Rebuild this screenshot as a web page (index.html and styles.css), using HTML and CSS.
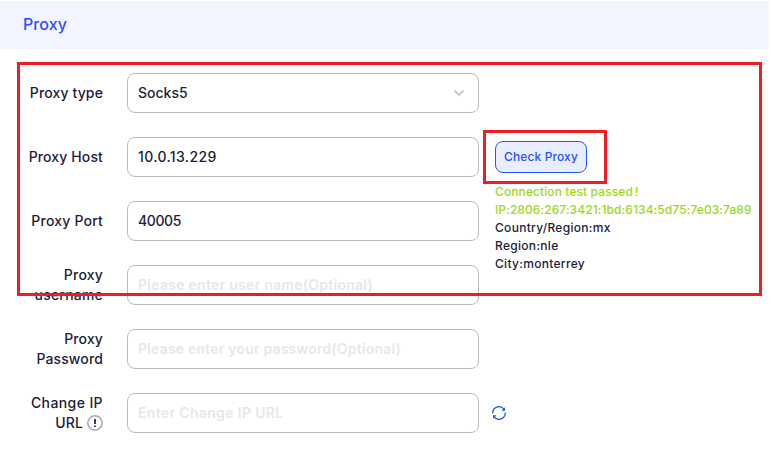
FILE: index.html
```html
<!DOCTYPE html>
<html lang="en">
<head>
<meta charset="utf-8">
<title>Proxy</title>
<link rel="stylesheet" href="styles.css">
</head>
<body>
<main class="panel">
  <header class="panel-header"><h1 class="title">Proxy</h1></header>
  <form class="form">
    <div class="row">
      <div class="label"><span>Proxy type</span></div>
      <div class="field"><span class="value socks">Socks5</span>
        <svg class="chevron" width="12" height="8" viewBox="0 0 12 8"><path d="M1.500 1.500 6 6l4.500-4.500" fill="none" stroke="#c5c6cc" stroke-width="1.800"/></svg>
      </div>
    </div>
    <div class="row">
      <div class="label"><span class="host-label">Proxy Host</span></div>
      <div class="field"><span class="value host">10.0.13.229</span></div>
      <div class="side">
        <button class="check" type="button"><span>Check Proxy</span></button>
        <div class="result">
          <div class="ok passed">Connection test passed<span class="bang">!</span></div>
          <div class="ok ip">IP:2806:267:3421:1bd:6134:5d75:7e03:7a89</div>
          <div class="country">Country/Region:mx</div>
          <div class="region">Region:nle</div>
          <div class="city">City:monterrey</div>
        </div>
      </div>
    </div>
    <div class="row">
      <div class="label"><span class="port-label">Proxy Port</span></div>
      <div class="field"><span class="value port">40005</span></div>
    </div>
    <div class="row">
      <div class="label"><span class="user-label">Proxy<br>username</span></div>
      <div class="field"><span class="hint user">Please enter user name(Optional)</span></div>
    </div>
    <div class="row">
      <div class="label"><span>Proxy<br>Password</span></div>
      <div class="field"><span class="hint pass">Please enter your password(Optional)</span></div>
    </div>
    <div class="row">
      <div class="label"><span class="change-label">Change IP</span><br><span class="url">URL <svg class="info" width="16" height="16" viewBox="0 0 16 16"><circle cx="8" cy="8" r="7.200" fill="none" stroke="#a3a5b3" stroke-width="1.500"/><path d="M8 4v5M8 10.400v1.700" stroke="#1c1d3a" stroke-width="1.700"/></svg></span></div>
      <div class="field"><span class="hint change">Enter Change IP URL</span></div>
      <svg class="refresh" width="14" height="14" viewBox="0 0 14 14"><path d="M.8 7.500A6.200 6.200 0 0 1 12 3.300M13.200 6.500A6.200 6.200 0 0 1 2 10.700" fill="none" stroke="#2354f4" stroke-width="1.300"/><path d="M13 1.200v3.600H9.400zM1 12.800V9.200h3.600z" fill="#2354f4"/></svg>
    </div>
  </form>
  <div class="mark mark-form"></div>
  <div class="mark mark-check"></div>
</main>
</body>
</html>
```
FILE: styles.css
```css
* { box-sizing: border-box; }
body {
  margin: 0;
  background: #fff;
  color: #1c1d3a;
  font: 500 14px/20px Inter, "Liberation Sans", sans-serif;
}
.panel { position: relative; width: 771px; height: 460px; padding-top: 1px; overflow: hidden; }
.panel-header { width: 769px; height: 48px; padding: 0 23px; display: flex; align-items: center; background: #f2f5ff; }
.title { margin: -2px 0 0; font-size: 16px; font-weight: 500; line-height: 24px; letter-spacing: .1px; color: #2a50fb; }
.form { padding: 24px 0 0 17px; display: flex; flex-direction: column; gap: 24px; }
.row { display: flex; align-items: center; height: 40px; }
.label { width: 86px; text-align: right; flex: none; letter-spacing: .13px; }
.port-label, .user-label { letter-spacing: .2px; }
.change-label { letter-spacing: .4px; }
.field {
  width: 352px; height: 40px; margin-left: 24px; padding: 0 13px 0 10px; flex: none;
  display: flex; align-items: center; justify-content: space-between;
  border: 1px solid #b9bac3; border-radius: 8px; background: #fff;
}
.host { letter-spacing: .36px; }
.port { letter-spacing: -.4px; }
.hint { color: #e7e7eb; font-weight: 600; }
.user { letter-spacing: .27px; }
.pass { letter-spacing: .2px; }
.change { letter-spacing: .34px; }
.side { align-self: flex-start; margin: 4px 0 0 16px; white-space: nowrap; }
.check {
  width: 92px; height: 32px; padding: 0; display: flex; align-items: center; justify-content: center;
  border: 1px solid #2454ff; border-radius: 8px; background: #e8edff; color: #2a50fb;
  font: 500 12px/18px Inter, "Liberation Sans", sans-serif; letter-spacing: .12px;
}
.result { margin-top: 10px; font-size: 12px; line-height: 18px; }
.ok { color: #9bd91b; }
.passed { letter-spacing: .1px; }
.ip { letter-spacing: .09px; }
.country, .region, .city { letter-spacing: .3px; }
.bang { margin-left: 2px; }
.url { display: inline-flex; align-items: center; gap: 4px; vertical-align: top; }
.info { display: block; }
.refresh { margin-left: 13px; }
.mark { position: absolute; border: 3px solid #ee1c24; }
.mark-form { left: 17px; top: 62px; width: 745px; height: 234px; }
.mark-check { left: 483px; top: 130px; width: 124px; height: 54px; }
```
